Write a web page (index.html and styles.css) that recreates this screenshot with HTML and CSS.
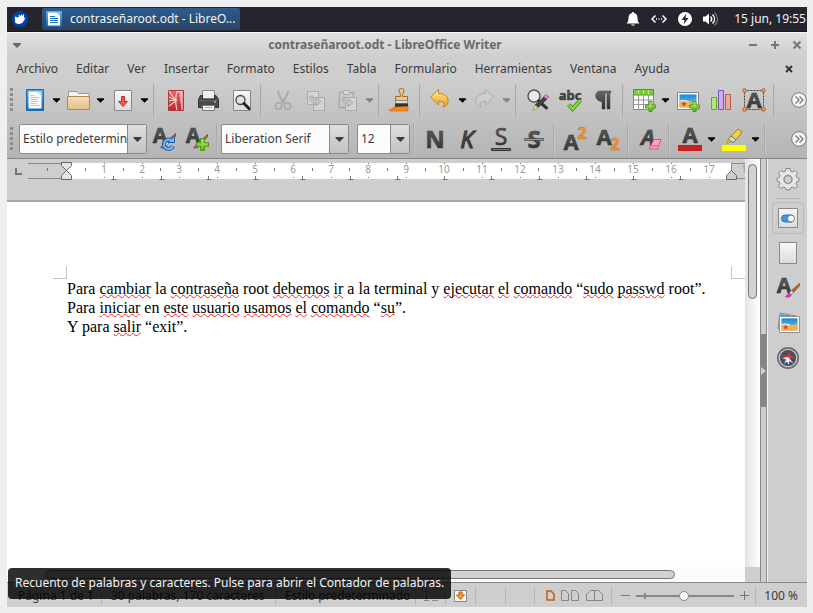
FILE: index.html
```html
<!DOCTYPE html>
<html lang="es">
<head>
<meta charset="utf-8">
<title>contraseñaroot.odt - LibreOffice Writer</title>
<link rel="stylesheet" href="styles.css">
</head>
<body>
<svg class="defs" aria-hidden="true">
  <defs>
    <linearGradient id="g-dark" x2="0" y2="1"><stop stop-color="#6a6a6a"/><stop offset="1" stop-color="#2c2c2c"/></linearGradient>
    <linearGradient id="g-paper" x2="0" y2="1"><stop stop-color="#f8f8f8"/><stop offset="1" stop-color="#dcdcdc"/></linearGradient>
    <linearGradient id="g-blue" x2="0" y2="1"><stop stop-color="#5fb0ea"/><stop offset="1" stop-color="#1b66ab"/></linearGradient>
    <linearGradient id="g-folder" x2="0" y2="1"><stop stop-color="#f5ddb5"/><stop offset="1" stop-color="#e3bf88"/></linearGradient>
    <linearGradient id="g-red" x2="0" y2="1"><stop stop-color="#e8696a"/><stop offset="1" stop-color="#b8282c"/></linearGradient>
    <linearGradient id="g-gold" x2="0" y2="1"><stop stop-color="#fff0a0"/><stop offset="1" stop-color="#f09a12"/></linearGradient>
    <linearGradient id="g-green" x2="0" y2="1"><stop stop-color="#c4f27a"/><stop offset="1" stop-color="#5fb321"/></linearGradient>
    <linearGradient id="g-sky" x2="0" y2="1"><stop stop-color="#1a86cf"/><stop offset="1" stop-color="#7ed0f4"/></linearGradient>
  </defs>
  <symbol id="arrow" viewBox="0 0 8 5"><path d="M0 0h8v1L4 5 0 1z" fill="currentColor"/></symbol>
  <symbol id="plus" viewBox="0 0 11 11"><path d="M4 .5h3V4h3.500v3H7v3.500H4V7H.5V4H4z" fill="url(#g-green)" stroke="#4e9a12"/></symbol>
  <symbol id="brush" viewBox="0 0 16 16"><path d="M15.500.5 7 8l2 2 6.500-7z" fill="#c0701f" stroke="#6f3d0c" stroke-width=".7"/><path d="M7 8 4.500 10.500l2 2L9 10z" fill="#ddd" stroke="#777" stroke-width=".7"/><path d="M4.500 10.500c-2 0-1.500 3-4 4 2.500 1.500 6 .5 6-2z" fill="#d63fc0" stroke="#8f2380" stroke-width=".6"/></symbol>
  <symbol id="picture" viewBox="0 0 22 18"><path d="M.5.500h21v17H.5z" fill="#fff" stroke="#888"/><path d="M2.500 2.500h17v13h-17z" fill="url(#g-sky)"/><path d="M2.500 10c4-2 6-1 9-.5s6-1 8-1v7h-17z" fill="#f2b04e"/><path d="M2.500 9.500c4-2 6-.5 9 0" fill="none" stroke="#fff"/><path d="m7 9.500.7 1.500 1.800.2-1.300 1.200.3 1.600-1.500-.8-1.500.8.3-1.600-1.300-1.200 1.800-.2z" fill="#d8361c"/></symbol>
  <symbol id="more" viewBox="0 0 16 16"><circle cx="8" cy="8" r="7.300" fill="#f6f6f6" stroke="#777"/><path d="m4.500 4.500 3.500 3.500-3.500 3.500m4-7L12 8l-3.500 3.500" fill="none" stroke="#777" stroke-width="1.300"/></symbol>
</svg>

<div class="desktop">
  <header class="panel">
    <button class="whisker" aria-label="Menú de aplicaciones">
      <svg width="16" height="16" viewBox="0 0 16 16"><circle cx="8" cy="8" r="8" fill="#0044a6"/><path d="M3 5.500c1 .2 1.700 1 2.700 1L7 5.700 6.300 4h1l1 1.300L9 3.500h.8l.4 1.700 1-2h.9l-.2 2.500c1 1 1.300 2 .6 3-.7 1-1 1.300-1.700 2.500-1.300 2-5.300 2.200-7 .8-1-.8-1-1.500-.6-2.300C3.200 8.500 2.500 7 3 5.500z" fill="#fff"/></svg>
    </button>
    <button class="task">
      <svg width="16" height="16" viewBox="0 0 16 16"><path d="M0 0h16v16H0z" fill="url(#g-blue)"/><path d="M2 1.500h8.500l3.500 3.500v9.500H2z" fill="#fff"/><path d="M10.500 1.500H14V5z" fill="#9ad2f5"/><path d="M4 5.500h5M4 7.500h8M4 9.500h8M4 11.500h8" stroke="#1b72b8"/></svg>
      <span>contraseñaroot.odt - LibreO...</span>
    </button>
    <div class="tray">
      <svg width="14" height="16" viewBox="0 0 14 16"><path d="M7 1c.8 0 1 .5 1 1 2.500.6 3.500 2.500 3.500 5 0 3 .5 4 2 5.500H.5C2 11 2.500 10 2.500 7c0-2.500 1-4.400 3.500-5 0-.5.200-1 1-1zM5 13.500h4c-.5 1.500-3.500 1.500-4 0z" fill="#fff"/></svg>
      <svg width="16" height="16" viewBox="0 0 16 16"><path d="M4.500 4.500 1 8l3.500 3.500m7-7L15 8l-3.500 3.500" fill="none" stroke="#fff" stroke-width="1.500"/><path d="M5 8h1m1.500 0h1M10 8h1" stroke="#fff" stroke-width="1.300"/></svg>
      <svg width="14" height="14" viewBox="0 0 14 14"><circle cx="7" cy="7" r="7" fill="#fff"/><path d="M8.500 1.500 3.500 8h3L5.500 12.500l5-6.500h-3z" fill="#26252e"/></svg>
      <svg width="16" height="14" viewBox="0 0 16 14"><path d="M0 4.500h2.500L6 1.500v11L2.500 9.500H0z" fill="#fff"/><path d="M7.500 4.500c1.500 1.500 1.500 3.500 0 5M9.500 2.500c2.700 2.700 2.700 6.300 0 9" fill="none" stroke="#fff" stroke-width="1.400"/><path d="M11.500.5c4 4 4 9 0 13" fill="none" stroke="#77767d" stroke-width="1.400"/></svg>
    </div>
    <time class="clock">15 jun, 19:55</time>
  </header>

  <div class="titlebar">
    <button class="winmenu" aria-label="Menú de ventana"><svg width="8" height="5"><use href="#arrow"/></svg></button>
    <h1>contraseñaroot.odt - LibreOffice Writer</h1>
    <div class="winbuttons">
      <button aria-label="Minimizar"><svg width="10" height="10"><path d="M1 5h8" stroke="#777" stroke-width="2"/></svg></button>
      <button aria-label="Maximizar"><svg width="10" height="10"><path d="M1 5h8M5 1v8" stroke="#777" stroke-width="2"/></svg></button>
      <button aria-label="Cerrar"><svg width="10" height="10"><path d="m1.500 1.500 7 7m0-7-7 7" stroke="#777" stroke-width="2"/></svg></button>
    </div>
  </div>

  <nav class="menubar">
    <button>Archivo</button><button>Editar</button><button>Ver</button><button>Insertar</button><button>Formato</button><button>Estilos</button><button>Tabla</button><button>Formulario</button><button>Herramientas</button><button>Ventana</button><button>Ayuda</button>
    <button class="closedoc" aria-label="Cerrar documento"><svg width="8" height="8"><path d="m1 1 6 6m0-6L1 7" stroke="#333" stroke-width="2"/></svg></button>
  </nav>

  <div class="toolbars">
    <div class="toolbar standard">
      <span class="grip"></span>
      <button class="tool" aria-label="Nuevo"><svg class="icon" viewBox="0 0 24 24"><path d="M3.500 1.500h17v21h-17z" fill="url(#g-blue)" stroke="#1a68ac"/><path d="M5.500 3.500h9l4 4v13h-13z" fill="#fafafa"/><path d="M14 3.500h4.500V8z" fill="#bfe4fa"/><path d="M7.500 7.500h4M7.500 9.500h9M7.500 11.500h7M7.500 13.500h8M7.500 15.500h6M7.500 17.500h9" stroke="#c4c4c4"/></svg></button>
      <button class="drop" aria-label="Más opciones de Nuevo"><svg><use href="#arrow"/></svg></button>
      <button class="tool" aria-label="Abrir"><svg class="icon" viewBox="0 0 24 24"><path d="M1.500 10V3.500h8.500l1.500 2h10.500V10" fill="#f3f3f3" stroke="#999"/><path d="M.5 8.500h22v13H.5z" fill="url(#g-folder)" stroke="#b08a55"/></svg></button>
      <button class="drop" aria-label="Más opciones de Abrir"><svg><use href="#arrow"/></svg></button>
      <button class="tool" aria-label="Guardar"><svg class="icon" viewBox="0 0 24 24"><path d="M3.500 2.500h17v20h-17z" fill="url(#g-paper)" stroke="#888"/><path d="M10.500 8.500h3v5h3L12 18.500l-4.500-5h3z" fill="#ee5a5a" stroke="#c22d2d"/></svg></button>
      <button class="drop" aria-label="Más opciones de Guardar"><svg><use href="#arrow"/></svg></button>
      <span class="sep"></span>
      <button class="tool" aria-label="Exportar a PDF"><svg class="icon" viewBox="0 0 24 24"><path d="M5.500 2.500h15v20h-15z" fill="url(#g-red)" stroke="#a83a3a"/><path d="M6 3c3 5 6 8 7.500 9.500L6 18M6 13c3-1 5-1 7.500-.5M14 22c-2-7-1.500-13 0-18.500h5V22M6 9l7.500 3.500" fill="none" stroke="#f4caca" stroke-width="1.200"/><path d="M16 4h3v17c-1.500-5-2-11-3-17z" fill="#f3c4c4" opacity=".7"/></svg></button>
      <button class="tool" aria-label="Imprimir"><svg class="icon" viewBox="0 0 24 24"><path d="M6.500 10V2.500h12V10" fill="#eee" stroke="#888"/><path d="M4.500 7.500h2V11h12V7.500h1.500l2.500 4v8h-20v-8z" fill="#4b4b4b" stroke="#303030"/><path d="M3 12.500h19" stroke="#666"/><path d="M18 13h2v2h-2z" fill="#35b4e6"/><path d="M6.500 17.500h12v5h-12z" fill="#f2f2f2" stroke="#777"/><path d="M9 19.500h7" stroke="#aaa"/></svg></button>
      <button class="tool" aria-label="Previsualización"><svg class="icon" viewBox="0 0 24 24"><path d="M4.500 2.500h17v20h-17z" fill="url(#g-paper)" stroke="#888"/><circle cx="11.500" cy="12" r="4.500" fill="#e3e3e3" stroke="#444" stroke-width="1.300"/><path d="m15 15.500 5 5" stroke="#222" stroke-width="3" stroke-linecap="round"/></svg></button>
      <span class="sep"></span>
      <button class="tool off" disabled aria-label="Cortar"><svg class="icon" viewBox="0 0 24 24" fill="none" stroke="#777"><path d="M8 3c0 4 3 8 6.500 12M18 3c0 4-3 8-6.500 12" stroke-width="2.200"/><circle cx="8.500" cy="18" r="3.200" stroke-width="1.600"/><circle cx="17.500" cy="18" r="3.200" stroke-width="1.600"/></svg></button>
      <button class="tool off" disabled aria-label="Copiar"><svg class="icon" viewBox="0 0 24 24"><path d="M4.500 3.500h11v13h-11zM10.500 9.500h11v13h-11z" fill="#eee" stroke="#777"/><path d="M7 8v2c0 4 2 5 6 5v3l5-4.500-5-4v2.500c-2 0-3-1-3-4z" fill="#bbb" stroke="#777"/></svg></button>
      <button class="tool off" disabled aria-label="Pegar"><svg class="icon" viewBox="0 0 24 24"><path d="M3.500 4.500h14v15h-14z" fill="#ccc" stroke="#777" stroke-width="1.500"/><path d="M7.500 2.500h6v4h-6z" fill="#eee" stroke="#777"/><path d="M9.500 9.500h11v13h-11z" fill="#eee" stroke="#777"/><path d="M7 9v2c0 4 2 5 5 5v3l5-4.500-5-4v2.500c-2 0-3-1-3-4z" fill="#bbb" stroke="#777"/></svg></button>
      <button class="drop off" disabled aria-label="Más opciones de Pegar"><svg><use href="#arrow"/></svg></button>
      <span class="sep"></span>
      <button class="tool" aria-label="Clonar formato"><svg class="icon" viewBox="0 0 24 24"><path d="M12.500 8.500c0-3-1.500-5-1.500-6.500 0-2 5-2 5 0 0 1.500-1.500 3.500-1.500 6.500H19.500v4h-12v-4z" fill="#ecc489" stroke="#9b6b2c"/><path d="M7.500 12.500h12v3h-12z" fill="#ddd" stroke="#777" stroke-width=".7"/><path d="M7 15.500h13V20H7z" fill="#333"/><path d="M1 22c3-.5 3-2 6-3l13-.5V23H4c-1 0-2 0-3-1z" fill="#f08a1d" stroke="#c8650c" stroke-width=".6"/></svg></button>
      <span class="sep"></span>
      <button class="tool" aria-label="Deshacer"><svg class="icon" viewBox="0 0 24 24"><path d="M1.500 9 9.500 1.500v4c7 0 10.500 4 9.500 9-.5 2.500-2.500 4-5 4.500 2-3 1-6-4.500-6v4z" fill="url(#g-gold)" stroke="#c48a15"/></svg></button>
      <button class="drop" aria-label="Lista de deshacer"><svg><use href="#arrow"/></svg></button>
      <button class="tool off" disabled aria-label="Rehacer"><svg class="icon" viewBox="0 0 24 24"><path d="M20.500 9 12.500 1.500v4c-7 0-10.500 4-9.500 9 .5 2.500 2.500 4 5 4.500-2-3-1-6 4.500-6v4z" fill="#ddd" stroke="#777"/></svg></button>
      <button class="drop off" disabled aria-label="Lista de rehacer"><svg><use href="#arrow"/></svg></button>
      <span class="sep"></span>
      <button class="tool" aria-label="Buscar y reemplazar"><svg class="icon" viewBox="0 0 24 24"><circle cx="9" cy="8" r="6" fill="#e8e8e8" stroke="#555" stroke-width="1.500"/><path d="m13.500 13 8 7" stroke="#333" stroke-width="3" stroke-linecap="round"/><path d="m22 11-3-2-9 8 3 2.500z" fill="#444" stroke="#222" stroke-width=".7"/><path d="m24 9-3-2.500-2.500 2 3 2.500z" fill="#d58bd0" stroke="#8e4a8b" stroke-width=".6"/><path d="m10 17-2 5.500 5-3z" fill="#f5ea77" stroke="#998b25" stroke-width=".7"/></svg></button>
      <button class="tool" aria-label="Ortografía"><svg class="icon" viewBox="0 0 24 24"><text x="12" y="12" class="glyph abc">abc</text><path d="m10.500 16.500 4 4.500 8-9" fill="none" stroke="#3f8d14" stroke-width="4"/><path d="m10.500 16.500 4 4.500 8-9" fill="none" stroke="#8ada3c" stroke-width="2.200"/></svg></button>
      <button class="tool" aria-label="Marcas de formato"><svg class="icon" viewBox="0 0 24 24"><path d="M9 3h11v1.500h-1V21h-3V5h-2v16h-3V13.500C3 13.500 3 3 9 3z" fill="url(#g-dark)" stroke="#444" stroke-width=".5"/></svg></button>
      <span class="sep"></span>
      <button class="tool" aria-label="Insertar tabla"><svg class="icon" viewBox="0 0 24 24"><path d="M1.500 1.500h20v20h-20z" fill="#fafafa" stroke="#888"/><path d="M1.500 12h20M1.500 16.500h20M6.500 7v14.500M11.500 7v14.500M16.500 7v14.500" stroke="#999"/><path d="M1.500 1.500h20V7h-20z" fill="#7dcc35" stroke="#4f9a17"/><path d="M6.500 2v4.500m5-4.500v4.500m5-4.500v4.500" stroke="#b6e98a"/><use href="#plus" x="13" y="13" width="11" height="11"/></svg></button>
      <button class="drop" aria-label="Tamaño de tabla"><svg><use href="#arrow"/></svg></button>
      <button class="tool" aria-label="Insertar imagen"><svg class="icon" viewBox="0 0 24 24"><use href="#picture" x="1" y="4" width="22" height="18"/><use href="#plus" x="13" y="13" width="11" height="11"/></svg></button>
      <button class="tool" aria-label="Insertar gráfico"><svg class="icon" viewBox="0 0 24 24"><path d="M2.500 9.500h5v12h-5z" fill="#aee876" stroke="#62aa2a"/><path d="M9.500 2.500h5v19h-5z" fill="#cfa9f2" stroke="#8450b5"/><path d="M16.500 6.500h5v15h-5z" fill="#f0a79a" stroke="#bd5c4d"/></svg></button>
      <button class="tool" aria-label="Insertar cuadro de texto"><svg class="icon" viewBox="0 0 24 24"><path d="M2.500 2.500h19v19h-19z" fill="none" stroke="#444" stroke-dasharray="2 1"/><text x="12" y="20" class="glyph box">A</text><g fill="#f3b28b" stroke="#c55a22"><path d="M1 1h3v3H1zM20 1h3v3h-3zM1 20h3v3H1zM20 20h3v3h-3z"/></g></svg></button>
      <span class="sep"></span>
      <button class="overflow" aria-label="Más herramientas"><svg width="16" height="16"><use href="#more"/></svg></button>
    </div>

    <div class="toolbar formatting">
      <span class="grip"></span>
      <label class="combo style"><select aria-label="Estilo de párrafo"><option>Estilo predeterminado</option></select><span class="combo-arrow"><svg><use href="#arrow"/></svg></span></label>
      <button class="tool" aria-label="Actualizar estilo"><svg class="icon" viewBox="0 0 24 24"><text x="8" y="16" class="glyph sty">A</text><use href="#brush" x="8" y="6" width="16" height="16"/><path d="M19 13c-3.500-1.500-7 .5-7 4.500 0 5 7 6 9 1.500" fill="none" stroke="#1f5ca8" stroke-width="4"/><path d="M22.500 9v6.500h-6.500z" fill="#7db7f2" stroke="#1f5ca8"/><path d="M19 13c-3.500-1.500-7 .5-7 4.500 0 5 7 6 9 1.500" fill="none" stroke="#7db7f2" stroke-width="2"/></svg></button>
      <button class="tool" aria-label="Estilo nuevo"><svg class="icon" viewBox="0 0 24 24"><text x="8" y="16" class="glyph sty">A</text><use href="#brush" x="8" y="7" width="15" height="15"/><use href="#plus" x="11" y="11" width="13" height="13"/></svg></button>
      <span class="sep"></span>
      <label class="combo font"><select aria-label="Nombre de letra"><option>Liberation Serif</option></select><span class="combo-arrow"><svg><use href="#arrow"/></svg></span></label>
      <label class="combo size"><select aria-label="Tamaño de letra"><option>12</option></select><span class="combo-arrow"><svg><use href="#arrow"/></svg></span></label>
      <span class="sep"></span>
      <button class="tool" aria-label="Negrita"><svg class="icon" viewBox="0 0 24 24"><text x="12" y="21" class="glyph big">N</text></svg></button>
      <button class="tool" aria-label="Cursiva"><svg class="icon" viewBox="0 0 24 24"><text x="11" y="21" class="glyph big kursiv">K</text></svg></button>
      <button class="tool" aria-label="Subrayado"><svg class="icon" viewBox="0 0 24 24"><text x="12" y="18" class="glyph under">S</text><path d="M2.500 21.500h19v2h-19z" fill="#777" stroke="#333"/></svg></button>
      <button class="tool" aria-label="Tachado"><svg class="icon" viewBox="0 0 24 24"><text x="12" y="21" class="glyph big">S</text><path d="M2.500 11.500h19v2h-19z" fill="#999" stroke="#444" stroke-width=".7"/></svg></button>
      <span class="sep"></span>
      <button class="tool" aria-label="Superíndice"><svg class="icon" viewBox="0 0 24 24"><text x="8" y="23" class="glyph mid">A</text><text x="19" y="12" class="glyph num">2</text></svg></button>
      <button class="tool" aria-label="Subíndice"><svg class="icon" viewBox="0 0 24 24"><text x="8" y="18" class="glyph mid">A</text><text x="19" y="23" class="glyph num">2</text></svg></button>
      <span class="sep"></span>
      <button class="tool" aria-label="Limpiar formato"><svg class="icon" viewBox="0 0 24 24"><text x="11" y="18" class="glyph mid italic">A</text><path d="M17 12.500h7l-3.500 9.500H12z" fill="#f8a6c4" stroke="#dd4f88"/><path d="M13 19h8.500" stroke="#dd4f88"/></svg></button>
      <span class="sep"></span>
      <button class="tool" aria-label="Color de letra"><svg class="icon" viewBox="0 0 24 24"><text x="12" y="16" class="glyph mid">A</text><path d="M0 18h24v6H0z" fill="#c9211e"/></svg></button>
      <button class="drop" aria-label="Elegir color de letra"><svg><use href="#arrow"/></svg></button>
      <button class="tool" aria-label="Resalte"><svg class="icon" viewBox="0 0 24 24"><path d="m9 9 7-7 4 3-6 8z" fill="#f4cf4a" stroke="#a57d12"/><path d="m9 9 5 4-2 2-4-.5-1-3z" fill="#ddd" stroke="#777"/><path d="m7 12.500 2.500 2L4.500 16z" fill="#f2d000" stroke="#998100" stroke-width=".6"/><path d="M0 18h24v6H0z" fill="#ff0"/></svg></button>
      <button class="drop" aria-label="Elegir color de resalte"><svg><use href="#arrow"/></svg></button>
      <span class="sep"></span>
      <button class="overflow" aria-label="Más formatos"><svg width="16" height="16"><use href="#more"/></svg></button>
    </div>
  </div>

  <div class="workspace">
    <div class="editor">
      <svg class="ruler" height="43" aria-label="Regla">
        <path d="M60 4h664v16H60z" fill="#fff"/>
        <path d="M9 9v6h6" fill="none" stroke="#777" stroke-width="2"/>
        <path d="M21 4.500h33M21 19.500h33M724 4.500h20M724 19.500h20" stroke="#8a8a8a"/>
        <path d="M724.500 4v12" stroke="#8a8a8a"/>
        <path d="M54.500 3.500h10v3l-10 10v4h10v-4l-10-10z" fill="#e6e6e6" stroke="#666"/>
        <path d="M719.500 20.500v-4l5-5 5 5v4z" fill="#ccc" stroke="#666"/>
        <path d="M40.500 9v3M78.500 9v3M116.500 9v3M153.500 9v3M191.500 9v3M229.500 9v3M267.500 9v3M305.500 9v3M342.500 9v3M380.500 9v3M418.500 9v3M456.500 9v3M494.500 9v3M531.500 9v3M569.500 9v3M607.500 9v3M645.500 9v3M683.500 9v3" stroke="#777"/>
        <path d="M97.500 4v1m0 13v1M135.500 4v1m0 13v1M172.500 4v1m0 13v1M210.500 4v1m0 13v1M248.500 4v1m0 13v1M286.500 4v1m0 13v1M324.500 4v1m0 13v1M361.500 4v1m0 13v1M399.500 4v1m0 13v1M437.500 4v1m0 13v1M475.500 4v1m0 13v1M513.500 4v1m0 13v1M551.500 4v1m0 13v1M588.500 4v1m0 13v1M626.500 4v1m0 13v1M664.500 4v1m0 13v1M702.500 4v1m0 13v1" stroke="#777"/>
        <path d="M106.500 17v3m-2 .5h5M154.500 17v3m-2 .5h5M201.500 17v3m-2 .5h5M248.500 17v3m-2 .5h5M295.500 17v3m-2 .5h5M343.500 17v3m-2 .5h5M390.500 17v3m-2 .5h5M437.500 17v3m-2 .5h5M484.500 17v3m-2 .5h5M532.500 17v3m-2 .5h5M579.500 17v3m-2 .5h5M626.500 17v3m-2 .5h5M673.500 17v3m-2 .5h5" stroke="#777"/>
        <g class="numbers"><text x="97" y="14">1</text><text x="135" y="14">2</text><text x="172" y="14">3</text><text x="210" y="14">4</text><text x="248" y="14">5</text><text x="286" y="14">6</text><text x="324" y="14">7</text><text x="361" y="14">8</text><text x="399" y="14">9</text><text x="437" y="14">10</text><text x="475" y="14">11</text><text x="513" y="14">12</text><text x="551" y="14">13</text><text x="588" y="14">14</text><text x="626" y="14">15</text><text x="664" y="14">16</text><text x="702" y="14">17</text><text x="740" y="14">18</text></g>
      </svg>
      <main class="page">
        <div class="corners"><i></i><i></i></div>
        <div class="text">
          <p>Para <u>cambiar</u> la <u>contraseña</u> root <u>debemos</u> <u>ir</u> a la terminal y <u>ejecutar</u> <u>el</u> <u>comando</u> “<u>sudo</u> <u>passwd</u> root”.</p>
          <p>Para <u>iniciar</u> en <u>este</u> <u>usuario</u> <u>usamos</u> <u>el</u> <u>comando</u> “<u>su</u>”.</p>
          <p>Y para <u>salir</u> “exit”.</p>
        </div>
      </main>
      <div class="hscroll"><span></span></div>
    </div>
    <div class="vscroll"><span></span><i></i></div>
    <div class="splitter"><button aria-label="Ocultar barra lateral"><svg width="5" height="8"><path d="M0 0v8l5-4z" fill="#d0d0d0"/></svg></button></div>
    <aside class="sidebar">
      <button aria-label="Configuración de la barra lateral"><svg class="icon" viewBox="0 0 24 24"><path d="M10 1.500h4l.7 2.700 1.800.8 2.500-1.500L21.500 6 20 8.500l.8 1.800 2 .7v3l-2 .7-.8 1.800 1.500 2.500-2.500 2.500-2.500-1.500-1.800.8-.7 2h-4l-.7-2-1.800-.8L5 21.500 2.500 19 4 16.500l-.8-1.800-2-.7v-3l2-.7L4 8.500 2.500 6 5 3.500 7.500 5l1.800-.8z" fill="#e6e6e6" stroke="#858585"/><circle cx="12" cy="12.500" r="4" fill="#d0d0d0" stroke="#909090" stroke-width="1.500"/></svg></button>
      <hr>
      <button class="active" aria-label="Propiedades"><svg class="icon" viewBox="0 0 24 24"><path d="M2.500 2.500h19v19h-19z" fill="url(#g-paper)" stroke="#888"/><path d="M9 9h7v7H9a3.500 3.500 0 0 1 0-7z" fill="#3e97ea" stroke="#2a77c4"/><circle cx="15" cy="12.500" r="3.500" fill="#fff" stroke="#777"/></svg></button>
      <button aria-label="Página"><svg class="icon" viewBox="0 0 24 24"><path d="M3.500 1.500h17v21h-17z" fill="url(#g-paper)" stroke="#888"/></svg></button>
      <button aria-label="Estilos"><svg class="icon" viewBox="0 0 24 24"><text x="8" y="17" class="glyph sty">A</text><use href="#brush" x="9" y="7" width="15" height="15"/></svg></button>
      <button aria-label="Galería"><svg class="icon" viewBox="0 0 24 24"><path d="m4 2 16 3-3 16-15-3z" fill="#eee" stroke="#888"/><path d="m5 3 13 2H4z" fill="#35a3d8"/><use href="#picture" x="3" y="5" width="21" height="17"/></svg></button>
      <button aria-label="Navegador"><svg class="icon" viewBox="0 0 24 24"><circle cx="12" cy="12" r="10" fill="#454d60" stroke="#6c6c6c" stroke-width="2"/><circle cx="12" cy="12" r="8.700" fill="none" stroke="#c8c8c8" stroke-width="1.300"/><path d="m5 9 6 1 2-5 1 4.500 5.500 1.500-5.500 1.500-3-.5z" fill="#d93434"/><path d="m8 18 2-4.500-4-1.500 6-1 2 2 3.500 4.500-4-2.500-1 4-1.500-3.500z" fill="#eee"/></svg></button>
    </aside>
  </div>

  <footer class="statusbar">
    <span class="cell pages">Página 1 de 1</span>
    <span class="cell words">30 palabras, 170 caracteres</span>
    <span class="cell pstyle">Estilo predeterminado</span>
    <span class="cell mini"><svg width="16" height="12"><path d="M1 1.500h5M1 10.500h5M3.500 1v10M9 10.500h6" stroke="#888"/></svg></span>
    <span class="cell mini"><svg width="13" height="12"><path d="M.5.500h12v11H.5z" fill="#f4f4f4" stroke="#888"/><path d="M5 2h3v3h2.500l-4 4.500-4-4.500H5z" fill="#f79a2d" stroke="#cd5c00"/></svg></span>
    <span class="cell mini"></span>
    <span class="cell blank"></span>
    <div class="cell views">
      <button aria-label="Una página"><svg width="9" height="11"><path d="M1 1h4l3 3v6H1z" fill="none" stroke="#c65b0a" stroke-width="1.500"/></svg></button>
      <button aria-label="Varias páginas"><svg width="19" height="11"><path d="M.5.500h4l3 3v7h-7zM10.500.500h4l3 3v7h-7z" fill="none" stroke="#858585"/></svg></button>
      <button aria-label="Modo libro"><svg width="17" height="11"><path d="M8.500.5h-4l-3 3L.5 4v6.500h16V4l-4-3.500zM8.500.500v10" fill="none" stroke="#858585"/></svg></button>
    </div>
    <div class="cell zoom">
      <button aria-label="Reducir"><svg width="9" height="9"><path d="M0 4.500h9" stroke="#777"/></svg></button>
      <input type="range" aria-label="Escala" min="0" max="100" value="49">
      <button aria-label="Ampliar"><svg width="9" height="9"><path d="M0 4.500h9M4.500 0v9" stroke="#777"/></svg></button>
    </div>
    <span class="percent">100 %</span>
  </footer>
  <div class="tooltip" role="tooltip">Recuento de palabras y caracteres. Pulse para abrir el Contador de palabras.</div>
</div>
</body>
</html>
```
FILE: styles.css
```css
* { box-sizing: border-box; }

body {
  margin: 0;
  padding: 7px 6px 6px 7px;
  height: 100vh;
  background: #efefef;
  color: #3c3c3c;
  font: 12px/16px "Noto Sans", sans-serif;
}

button {
  display: flex;
  align-items: center;
  justify-content: center;
  margin: 0;
  padding: 0;
  border: 0;
  background: none;
  color: inherit;
  font: inherit;
}

svg { display: block; flex: none; }
.defs { position: absolute; width: 0; height: 0; }

.desktop {
  position: relative;
  display: flex;
  flex-direction: column;
  height: 100%;
  overflow: hidden;
  background: #cecece;
}

/* Desktop panel */
.panel {
  display: flex;
  align-items: center;
  flex: none;
  height: 25px;
  padding: 0 1px 1px 5px;
  background: #26252e;
  border-bottom: 1px solid #17161c;
  color: #f2f2f2;
}
.whisker { margin-right: 14px; }
.task {
  justify-content: flex-start;
  gap: 8px;
  width: 198px;
  height: 22px;
  padding: 0 4px;
  border-radius: 2px;
  background: linear-gradient(#2c5c8f, #2b4563);
  white-space: nowrap;
}
.tray {
  display: flex;
  align-items: center;
  gap: 11px;
  margin-left: auto;
  margin-right: 15px;
}

/* Title bar */
.titlebar {
  display: flex;
  align-items: center;
  flex: none;
  height: 25px;
  padding: 0 5px;
  border-top: 1px solid #f4f4f4;
  background: linear-gradient(#e0e0e0, #cecece);
}
.winmenu { width: 10px; color: #666; }
.titlebar h1 {
  flex: 1;
  margin: 0;
  font-size: 12px;
  line-height: 16px;
  text-align: center;
  color: #6a6a6a;
}
.winbuttons { display: flex; gap: 12px; }

/* Menu bar */
.menubar {
  display: flex;
  align-items: center;
  flex: none;
  gap: 18px;
  height: 23px;
  padding: 1px 14px 0 9px;
}
.menubar .closedoc { margin-left: auto; }

/* Toolbars */
.toolbars {
  flex: none;
  border-bottom: 1px solid #858585;
  background: linear-gradient(#cecece, #b4b4b4);
}
.toolbar {
  display: flex;
  align-items: center;
  padding-left: 3px;
  height: 38px;
}
.standard { height: 40px; }
.grip {
  width: 3px;
  height: 24px;
  margin-right: 5px;
  background: repeating-linear-gradient(#8c8c8c 0 3px, transparent 3px 5px);
}
.tool { flex: none; width: 33px; height: 32px; }
.icon { width: 24px; height: 24px; overflow: visible; }
.drop { flex: none; width: 11px; height: 32px; color: #000; }
.drop svg { width: 7px; height: 5px; }
.combo-arrow svg { width: 9px; height: 5px; }
.off { opacity: .35; }
.sep {
  flex: none;
  width: 2px;
  height: 33px;
  margin: 0 3px;
  background: linear-gradient(90deg, #a9a9a9 50%, #c6c6c6 50%);
}
.overflow { margin-left: auto; }

.glyph {
  font-family: "Noto Sans", sans-serif;
  font-weight: 700;
  text-anchor: middle;
  fill: url(#g-dark);
  stroke: #333;
  stroke-width: .5px;
}
.abc { font-size: 13px; }
.box { font-size: 22px; }
.sty { font-size: 21px; }
.mid { font-size: 22px; }
.big { font-size: 24px; }
.under { font-size: 23px; font-weight: 400; }
.italic { font-style: italic; }
.kursiv { font-style: italic; font-weight: 400; stroke-width: 1px; }
.num { font-size: 16px; fill: #f39a3a; stroke: #c8640c; }

.combo {
  display: grid;
  flex: none;
  height: 30px;
  border: 1px solid #8a8a8a;
  border-radius: 2px;
  background: #fcfcfc;
}
.combo > * { grid-area: 1 / 1; }
.combo select {
  width: 100%;
  min-width: 0;
  padding: 0 19px 0 3px;
  border: 0;
  appearance: none;
  background: none;
  color: #3c3c3c;
  font: inherit;
  overflow: hidden;
}
.combo-arrow {
  display: flex;
  align-items: center;
  justify-content: center;
  justify-self: end;
  width: 19px;
  border-left: 1px solid #8a8a8a;
  background: linear-gradient(#dedede, #c2c2c2);
  pointer-events: none;
}
.style { width: 128px; margin-left: 1px; }
.font { width: 128px; }
.size { width: 53px; margin-left: 8px; }

/* Document area */
.workspace { display: flex; flex: 1; min-height: 0; }
.editor {
  display: flex;
  flex: 1;
  flex-direction: column;
  min-width: 0;
  background: #fff;
}
.ruler {
  width: 100%;
  border-bottom: 2px solid #aaa;
  background: #cecece;
}
.numbers {
  fill: #999;
  font: 10px "Noto Sans", sans-serif;
  text-anchor: middle;
}
.page { flex: 1; min-height: 0; padding-top: 64px; }
.corners {
  display: flex;
  justify-content: space-between;
  padding-left: 46px;
}
.corners i {
  width: 14px;
  height: 13px;
  border: solid #c4c4c4;
  border-width: 0 1px 1px 0;
}
.corners i:last-child { border-width: 0 0 1px 1px; }
.text {
  padding-left: 60px;
  color: #000;
  font: 16px/19px "Liberation Serif", serif;
  white-space: nowrap;
}
.text p { margin: 0; }
.text u {
  text-decoration: underline wavy #f22 1px;
  text-underline-offset: 0;
  text-decoration-skip-ink: none;
}
.hscroll {
  flex: none;
  height: 15px;
  padding: 3px 70px 3px 38px;
  background: #fcfcfc;
}
.hscroll span, .vscroll span {
  display: block;
  height: 9px;
  border: 1px solid #777;
  border-radius: 5px;
  background: #d2d2d2;
}
.vscroll {
  display: flex;
  flex-direction: column;
  justify-content: space-between;
  flex: none;
  width: 15px;
  padding-top: 5px;
  background: linear-gradient(90deg, #e4e4e4, #fff);
}
.vscroll span { width: 9px; height: 135px; margin-left: 3px; }
.vscroll i { height: 15px; background: #cecece; }

.splitter {
  display: flex;
  align-items: center;
  flex: none;
  width: 7px;
  border: solid #8a8a8a;
  border-width: 0 1px;
  background: #cecece;
}
.splitter button {
  width: 100%;
  height: 73px;
  background: #858585;
}

.sidebar {
  display: flex;
  flex-direction: column;
  align-items: center;
  flex: none;
  gap: 3px;
  width: 40px;
  padding-top: 4px;
  border-left: 1px solid #f4f4f4;
  background: #cecece;
}
.sidebar button { flex: none; width: 32px; height: 32px; }
.sidebar hr {
  width: 22px;
  margin: 0;
  border: 0;
  border-top: 1px solid #b4b4b4;
}
.sidebar .active { border: 1px solid #b9b9b9; border-radius: 4px; }

/* Status bar */
.statusbar {
  display: flex;
  align-items: center;
  flex: none;
  height: 25px;
  padding-top: 1px;
  border-top: 1px solid #8a8a8a;
  background: #cecece;
  white-space: nowrap;
}
.cell {
  display: flex;
  align-items: center;
  flex: none;
  height: 18px;
  border-right: 1px solid #b6b6b6;
}
.pages { width: 95px; padding-left: 11px; }
.words { width: 174px; padding-left: 9px; }
.pstyle { width: 140px; padding-left: 9px; }
.mini { justify-content: center; width: 30px; }
.blank { flex: 1; }
.views { gap: 6px; padding: 0 8px 0 11px; }
.zoom { gap: 6px; padding: 0 6px 0 9px; }
.percent { padding: 0 9px 0 8px; }

input[type="range"] {
  width: 98px;
  height: 12px;
  margin: 0;
  appearance: none;
  background: linear-gradient(#888, #888) 8px 50% / 2px 6px no-repeat, linear-gradient(#888, #888) 0 50% / 100% 2px no-repeat;
}
input[type="range"]::-webkit-slider-thumb {
  width: 10px;
  height: 10px;
  border: 1px solid #888;
  border-radius: 50%;
  appearance: none;
  background: #f4f4f4;
}

.tooltip {
  position: absolute;
  left: 1px;
  bottom: 8px;
  padding: 7px 7px 8px;
  border-radius: 4px;
  background: rgba(0, 0, 0, .82);
  color: #f4f4f4;
  white-space: nowrap;
}
```
